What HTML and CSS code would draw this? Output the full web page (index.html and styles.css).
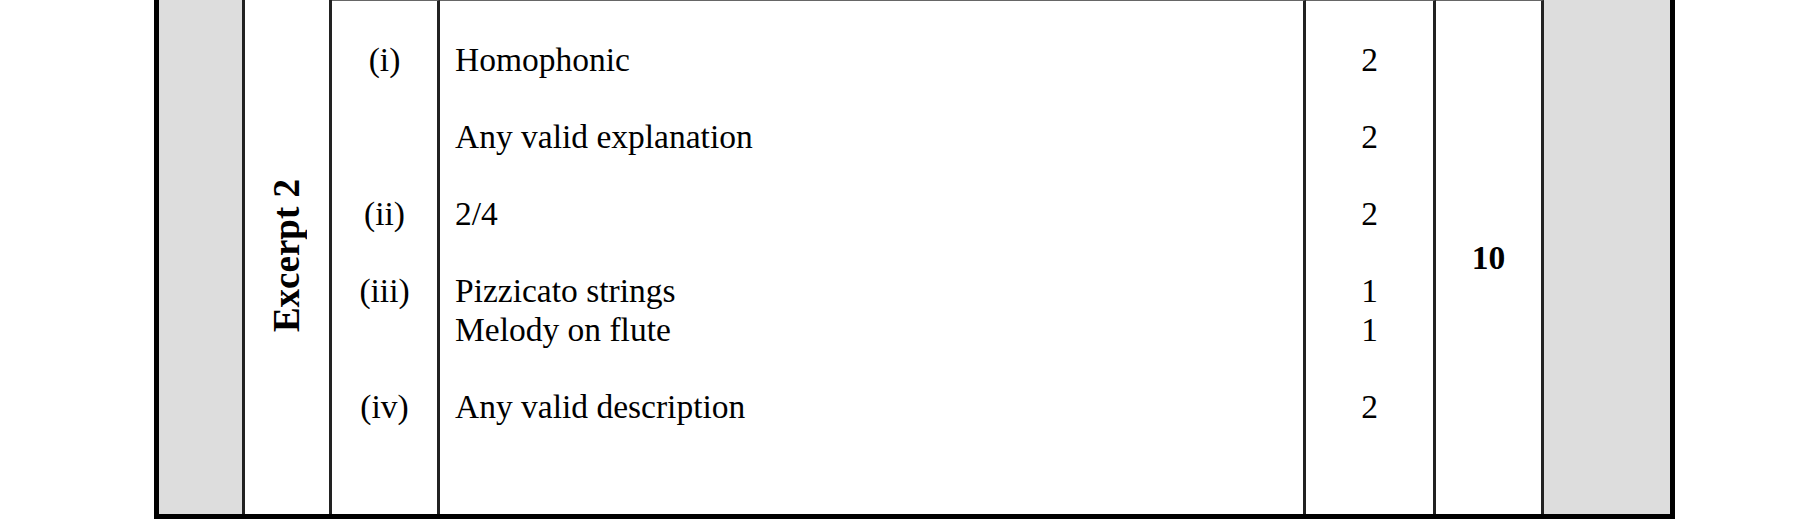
FILE: index.html
```html
<!DOCTYPE html>
<html lang="en">
<head>
<meta charset="utf-8">
<title>Excerpt 2 marking scheme</title>
<link rel="stylesheet" href="styles.css">
</head>
<body>
<div class="page">
  <div class="scheme">
    <div class="cell shade"></div>
    <div class="cell excerpt"><span class="vertical">Excerpt 2</span></div>
    <div class="cell num top">
      <p>(i)</p><p></p><p></p><p></p><p>(ii)</p><p></p><p>(iii)</p><p></p><p></p><p>(iv)</p>
    </div>
    <div class="cell answer top">
      <p>Homophonic</p><p></p><p>Any valid explanation</p><p></p><p>2/4</p><p></p><p>Pizzicato strings</p><p>Melody on flute</p><p></p><p>Any valid description</p>
    </div>
    <div class="cell marks top">
      <p>2</p><p></p><p>2</p><p></p><p>2</p><p></p><p>1</p><p>1</p><p></p><p>2</p>
    </div>
    <div class="cell total top"><span class="bold">10</span></div>
    <div class="cell shade last"></div>
  </div>
</div>
</body>
</html>
```

FILE: styles.css
```css
* { box-sizing: border-box; }
html, body { margin: 0; padding: 0; background: #fff; }
body {
  font-family: "Liberation Serif", "Times New Roman", serif;
  color: #000;
  width: 1818px;
  height: 528px;
  overflow: hidden;
}
.page { padding-left: 154px; }
.scheme {
  display: grid;
  grid-template-columns: 91px 87px 108px 866px 130px 108px 131px;
  width: 1521px;
  height: 519px;
  border-bottom: 5px solid #000;
}
.cell {
  border-right: 3px solid #222;
  font-size: 33.5px;
  line-height: 38.5px;
}
.shade { background: #dddddd; border-left: 5px solid #000; }
.shade.last { border-left: 0; border-right: 5px solid #000; }
.top { border-top: 1px solid #666; }
.excerpt {
  display: flex;
  align-items: center;
  justify-content: center;
}
.vertical {
  writing-mode: vertical-rl;
  transform: rotate(180deg);
  font-weight: bold;
  font-size: 37px;
  line-height: 40px;
  margin-top: -2px;
}
.num, .answer, .marks { padding-top: 40px; }
.num p, .answer p, .marks p { margin: 0; height: 38.5px; white-space: nowrap; }
.num, .marks { text-align: center; }
.answer { padding-left: 15px; }
.total {
  display: flex;
  align-items: center;
  justify-content: center;
}
.bold { font-weight: bold; margin-top: 1px; }
```
